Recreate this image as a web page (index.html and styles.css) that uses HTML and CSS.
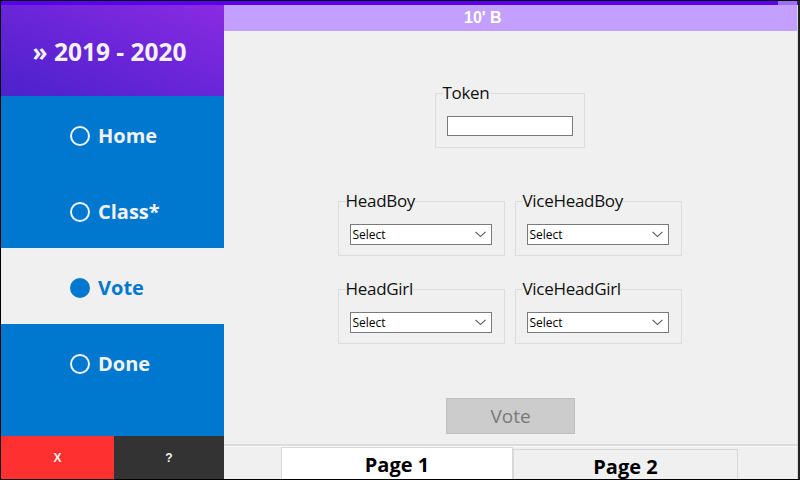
FILE: index.html
```html
<!DOCTYPE html>
<html>
<head>
<meta charset="utf-8">
<link rel="stylesheet" href="styles.css">
</head>
<body>
<div class="window">
  <div class="topstrip"><span class="topstrip-fill"></span><span class="topstrip-end"></span></div>
  <div class="frame">
    <aside class="sidebar">
      <div class="brand">» 2019 - 2020</div>
      <nav class="nav">
        <div class="nav-item"><span class="dot"></span>Home</div>
        <div class="nav-item"><span class="dot"></span>Class*</div>
        <div class="nav-item active"><span class="dot"></span>Vote</div>
        <div class="nav-item"><span class="dot"></span>Done</div>
      </nav>
      <div class="sidebar-foot">
        <div class="btn-close">X</div>
        <div class="btn-help">?</div>
      </div>
    </aside>
    <main class="main">
      <div class="class-title">10' B</div>
      <div class="content">
        <fieldset class="group token">
          <legend>Token</legend>
          <div class="textbox"></div>
        </fieldset>
        <div class="grid">
          <fieldset class="group">
            <legend>HeadBoy</legend>
            <div class="select"><span>Select</span><svg width="11" height="7" viewBox="0 0 11 7"><path d="M0.5 0.8 L5.5 5.6 L10.5 0.8" fill="none" stroke="#555" stroke-width="1.1"/></svg></div>
          </fieldset>
          <fieldset class="group">
            <legend>ViceHeadBoy</legend>
            <div class="select"><span>Select</span><svg width="11" height="7" viewBox="0 0 11 7"><path d="M0.5 0.8 L5.5 5.6 L10.5 0.8" fill="none" stroke="#555" stroke-width="1.1"/></svg></div>
          </fieldset>
          <fieldset class="group">
            <legend>HeadGirl</legend>
            <div class="select"><span>Select</span><svg width="11" height="7" viewBox="0 0 11 7"><path d="M0.5 0.8 L5.5 5.6 L10.5 0.8" fill="none" stroke="#555" stroke-width="1.1"/></svg></div>
          </fieldset>
          <fieldset class="group">
            <legend>ViceHeadGirl</legend>
            <div class="select"><span>Select</span><svg width="11" height="7" viewBox="0 0 11 7"><path d="M0.5 0.8 L5.5 5.6 L10.5 0.8" fill="none" stroke="#555" stroke-width="1.1"/></svg></div>
          </fieldset>
        </div>
        <div class="vote-btn">Vote</div>
      </div>
      <div class="tabs">
        <div class="tab active">Page 1</div>
        <div class="tab">Page 2</div>
      </div>
    </main>
  </div>
</div>
</body>
</html>
```
FILE: styles.css
```css
* { box-sizing: border-box; }
html, body { margin: 0; padding: 0; background: #fff; }
body { font-family: "Open Sans", "Noto Sans", sans-serif; }

.window {
  width: 800px;
  height: 480px;
  border: 1px solid #000;
  border-right: 2px solid #222;
  display: flex;
  flex-direction: column;
  overflow: hidden;
  background: #f0f0f0;
}

.topstrip { height: 4px; display: flex; background: #5b00ee; }
.topstrip-fill { flex: 1; }
.topstrip-end { width: 19px; background: #9d6ff2; margin-right: 1px; }

.frame { flex: 1; display: flex; min-height: 0; }

.sidebar { width: 223px; display: flex; flex-direction: column; }
.brand {
  height: 91px;
  background: linear-gradient(to top right, #4b22cc 0%, #6a25d8 50%, #8a2be2 100%);
  color: #f2f2f2;
  font-weight: 700;
  font-size: 24.5px;
  display: flex;
  align-items: center;
  justify-content: center;
  padding-right: 6px;
  padding-top: 2px;
}
.nav { flex: 1; display: flex; flex-direction: column; background: #0078d0; }
.nav-item {
  height: 76px;
  background: #0078d0;
  color: #f2f2f2;
  font-weight: 700;
  font-size: 20px;
  display: flex;
  align-items: center;
  padding-left: 69px;
  padding-top: 3px;
  gap: 8px;
}
.nav-item .dot {
  width: 20px; height: 20px;
  border: 2px solid #f2f2f2;
  border-radius: 50%;
}
.nav-item.active { background: #f0f0f0; color: #0078d0; }
.nav-item.active .dot { background: #0078d0; border-color: #0078d0; }

.sidebar-foot { height: 43px; display: flex; }
.btn-close, .btn-help {
  display: flex; align-items: center; justify-content: center;
  color: #f2f2f2; font-weight: 700; font-size: 12px;
  font-family: "Liberation Sans", Arial, sans-serif;
}
.btn-close { width: 113px; background: #ff3030; }
.btn-help { flex: 1; background: #333333; }

.main {
  flex: 1;
  display: flex;
  flex-direction: column;
  border-right: 1px solid #d9d9d9;
  min-width: 0;
}
.class-title {
  height: 26px;
  background: #c39fff;
  color: #fff;
  font-family: "Liberation Sans", Arial, sans-serif;
  font-weight: 700;
  font-size: 16px;
  display: flex;
  align-items: center;
  padding-left: 240px;
}
.content {
  flex: 1;
  display: flex;
  flex-direction: column;
  align-items: center;
  padding-right: 2px;
  border-bottom: 2px solid #dcdcdc;
}

.group {
  margin: 0;
  border: 1px solid #dcdcdc;
  padding: 13px 12px 11px 11px;
}
.group legend {
  font-size: 17px;
  line-height: 20px;
  padding: 0;
  margin-left: -4px;
  color: #111;
  font-family: "Open Sans", sans-serif;
  letter-spacing: -0.3px;
}
.token { width: 150px; margin-top: 52px; padding: 13px 11px 11px 11px; }
.textbox { height: 20px; border: 1px solid #7a7a7a; background: #fff; }

.grid {
  margin-top: 43px;
  display: grid;
  grid-template-columns: 167px 167px;
  column-gap: 10px;
  row-gap: 23px;
}
.grid .group { padding-bottom: 10px; }
.select {
  height: 21px;
  border: 1px solid #7a7a7a;
  background: #fff;
  display: flex;
  align-items: center;
  justify-content: space-between;
  padding: 0 5px 0 2px;
  font-size: 12px;
  color: #000;
}
.select svg { display: block; }

.vote-btn {
  margin-top: 54px;
  margin-left: 2px;
  width: 129px;
  height: 36px;
  background: #cccccc;
  border: 1px solid #bfbfbf;
  color: #7a7a7a;
  font-size: 19px;
  display: flex;
  align-items: center;
  justify-content: center;
}

.tabs {
  height: 33px;
  display: flex;
  align-items: flex-end;
  padding-left: 57px;
  border-top: 1px solid #fafafa;
}
.tab {
  width: 225px;
  height: 30px;
  border: 1px solid #d9d9d9;
  border-bottom: none;
  font-weight: 700;
  font-size: 20px;
  color: #000;
  display: flex;
  align-items: center;
  justify-content: center;
  background: #f0f0f0;
  padding-top: 4px;
}
.tab.active { width: 232px; height: 32px; background: #fff; padding-top: 2px; }
```
